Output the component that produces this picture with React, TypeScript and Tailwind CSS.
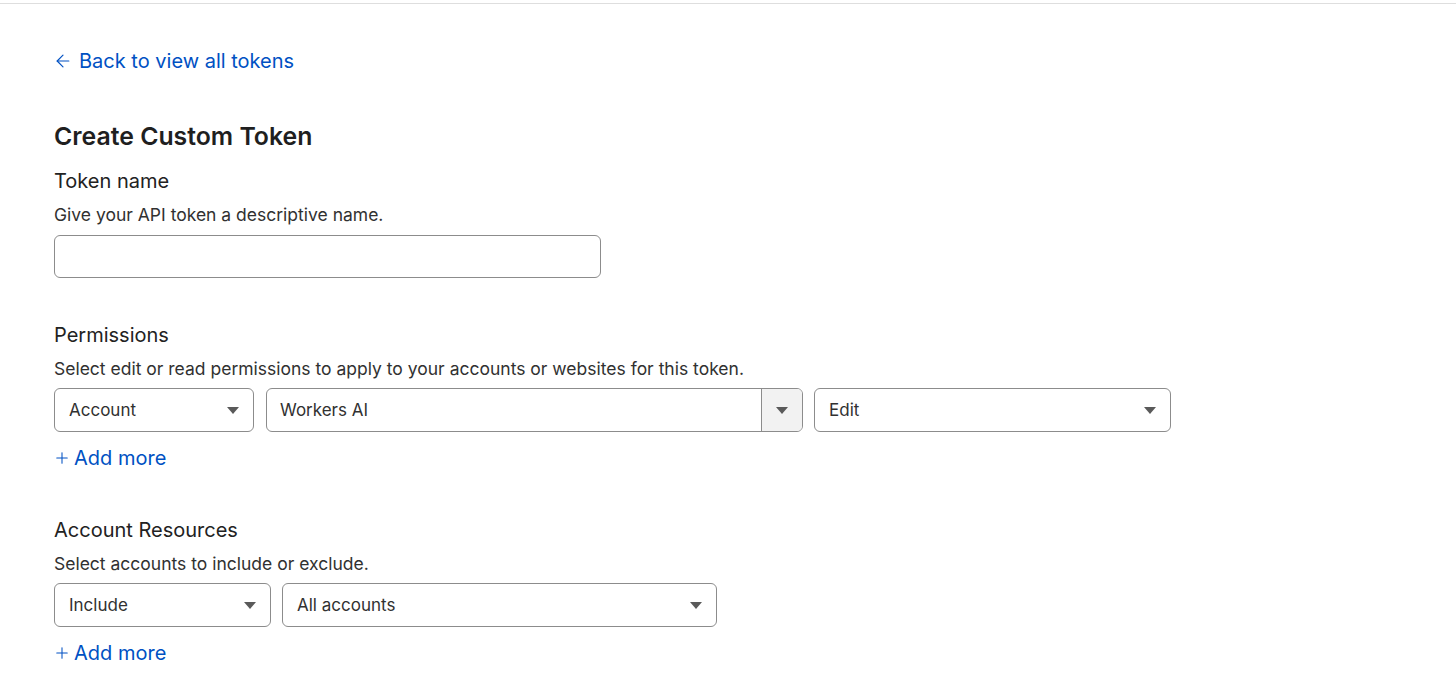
import { ArrowLeft, Plus } from 'lucide-react';

function Caret() {
    return (
        <svg width="12" height="7" viewBox="0 0 12 7" className="shrink-0">
            <path d="M0 0 L12 0 L6 7 Z" fill="#5a5a5a" />
        </svg>
    );
}

function Select({ label, width }: { label: string; width: string }) {
    return (
        <div className={`${width} h-[44px] flex items-center justify-between pl-[14px] pr-[14px] border border-[#8c8c8c] rounded-[6px] bg-white`}>
            <span className="text-[17px] leading-[24px] text-[#313131]">{label}</span>
            <Caret />
        </div>
    );
}

function AddMore() {
    return (
        <div className="mt-[12px] flex items-center gap-[3px] text-[#0051c3] text-[20px] leading-[28px]">
            <Plus size={18} strokeWidth={1.4} className="-ml-[1px]" />
            <span>Add more</span>
        </div>
    );
}

export default function App() {
    return (
        <div className="min-h-screen bg-white" style={{ fontFamily: 'Inter, "Noto Sans", sans-serif' }}>
            <div className="h-[3px] bg-white" />
            <div className="border-t border-[#dedede] px-[54px]">
                {/* Back link */}
                <div className="mt-[43px] flex items-center gap-[6px] text-[#0051c3] text-[20px] leading-[28px]">
                    <ArrowLeft size={20} strokeWidth={1.4} className="-ml-[1px]" />
                    <span>Back to view all tokens</span>
                </div>

                <h1 className="mt-[45px] text-[24.8px] leading-[32px] font-semibold text-[#1f1f1f]">Create Custom Token</h1>

                {/* Token name */}
                <div className="mt-[15px] text-[20px] leading-[28px] text-[#222]">Token name</div>
                <div className="mt-[8px] text-[17.5px] leading-[24px] text-[#313131]">Give your API token a descriptive name.</div>
                <input className="mt-[8px] block w-[547px] h-[43px] border border-[#8c8c8c] rounded-[6px] outline-none" />

                {/* Permissions */}
                <div className="mt-[43px] text-[20px] leading-[28px] text-[#222]">Permissions</div>
                <div className="mt-[8px] text-[17.5px] leading-[24px] text-[#313131]">
                    Select edit or read permissions to apply to your accounts or websites for this token.
                </div>
                <div className="mt-[7px] flex gap-[12px]">
                    <Select label="Account" width="w-[200px]" />
                    <div className="w-[537px] h-[44px] flex border border-[#8c8c8c] rounded-[6px] overflow-hidden">
                        <div className="flex-1 flex items-center pl-[13px] text-[17px] leading-[24px] text-[#313131]">Workers AI</div>
                        <div className="w-[41px] flex items-center justify-center bg-[#f2f2f2] border-l border-[#8c8c8c]">
                            <Caret />
                        </div>
                    </div>
                    <div className="-ml-[1px]">
                        <Select label="Edit" width="w-[357px]" />
                    </div>
                </div>
                <AddMore />

                {/* Account Resources */}
                <div className="mt-[44px] text-[20px] leading-[28px] text-[#222]">Account Resources</div>
                <div className="mt-[8px] text-[17.5px] leading-[24px] text-[#313131]">Select accounts to include or exclude.</div>
                <div className="mt-[7px] flex gap-[11px]">
                    <Select label="Include" width="w-[217px]" />
                    <Select label="All accounts" width="w-[435px]" />
                </div>
                <AddMore />
            </div>
        </div>
    );
}
